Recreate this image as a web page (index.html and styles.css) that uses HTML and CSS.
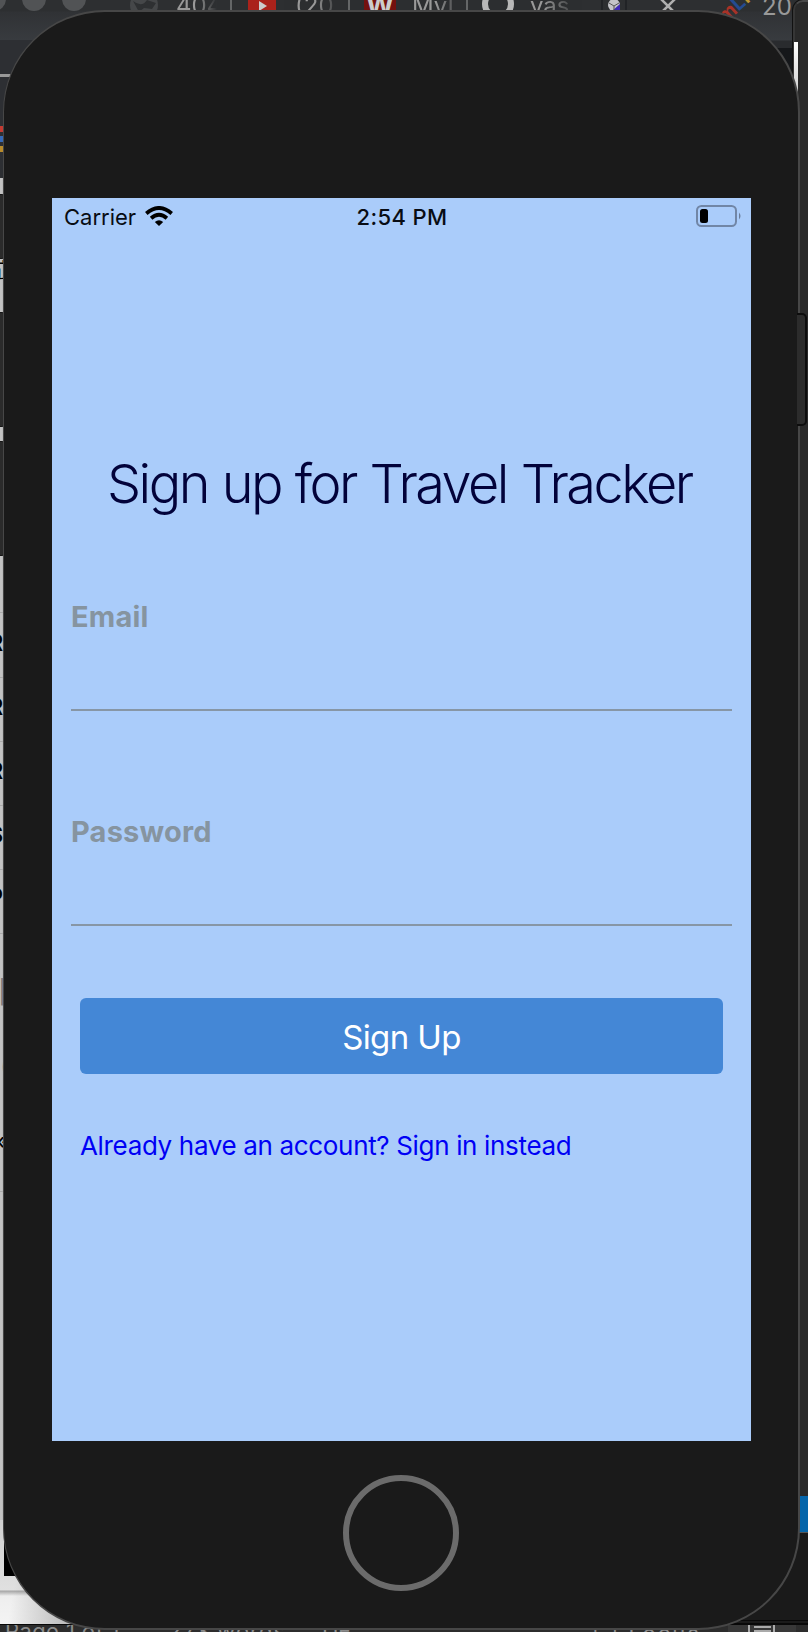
FILE: index.html
```html
<!DOCTYPE html>
<html lang="en">
<head>
<meta charset="utf-8">
<title>Travel Tracker</title>
<link rel="stylesheet" href="styles.css">
</head>
<body>
<div class="desktop">
  <div class="browser-tabs">
    <i class="light l1"></i><i class="light l2"></i><i class="light l3"></i>
    <svg class="tab-art" width="808" height="48" viewBox="0 0 808 48">
      <rect x="284" width="298" height="11" fill="#2c2e30"/>
      <circle cx="144" cy="5" r="14" fill="#454749"/>
      <path d="M133 1q9 7 14-1l9 3-4 6-8-1-5 4z" fill="#2e3032"/>
      <path d="M231 0v11M349 0v11M467 0v11" stroke="#77797a" stroke-width="1.5"/>
      <rect x="248" y="-8" width="28" height="20" fill="#aa221b"/>
      <path d="M259 1l8 5-8 5z" fill="#ccc"/>
      <rect x="364" y="-8" width="32" height="20" fill="#73110e"/>
      <circle cx="498" cy="4" r="13" fill="none" stroke="#b8b8b8" stroke-width="6"/>
      <path d="M602 0v11M626 0v11" stroke="#17181d" stroke-width="1"/>
      <circle cx="614" cy="5" r="6" fill="#c4c4c8"/><path d="M620 4v7h-8z" fill="#3d27b5"/><path d="M609 3l5 3 5-3M614 6v5" stroke="#555" fill="none"/>
      <path d="M660-2l16 16m0-16l-16 16" stroke="#b0b0b0" stroke-width="2.5"/>
    </svg>
    <span class="tt t1">404</span><span class="tt t2">(20</span><span class="tt t3">W</span><span class="tt t4">MyI</span><span class="tt t5">yas</span>
    <span class="tt ml"><b class="red">m</b><b class="blue">L</b><b class="gold">F</b></span><span class="tt t6">20</span>
  </div>
  <div class="browser-side"><i class="handle"></i><i class="bar red-bar"></i><i class="bar blue-bar"></i><i class="bar gold-bar"></i></div>
  <div class="dark-gap"></div>
  <div class="finder">
    <i class="row r1"></i><i class="row r2"></i><i class="row r3"></i><i class="row r4"></i><i class="row r5"></i><i class="row r6"></i><i class="row r7"></i>
    <span class="edge e0">疝</span><span class="edge e1">R</span><span class="edge e2">R</span><span class="edge e3">R</span><span class="edge e4">S</span><span class="edge e5">P</span><span class="edge faint e6">|</span><span class="edge faint e7">(</span><span class="edge e8">«</span>
  </div>
  <div class="paper"></div>
  <div class="black-patch"></div>
  <div class="editor"></div>
  <div class="white-patch"></div>
  <div class="blue-status"></div>
  <div class="corner"></div>
  <div class="word-bar">
    <span class="w1">Page 1 of 1</span><span class="w2">273 words</span><span class="w3">DE</span><span class="w4">[ ] Focus</span>
    <svg class="layout-icon" width="68" height="8" viewBox="0 0 68 8"><path fill="#383838" d="M0 0h68v8H0z"/><path d="M21 0v8M46 0v8M26 2h17M26 6h17" stroke="#aaa" stroke-width="2"/></svg>
  </div>
  <i class="side-button sb1"></i><i class="side-button sb2"></i><i class="side-button sb3"></i>

  <main class="phone">
    <section class="screen">
      <header class="status">
        <div class="carrier"><span>Carrier</span>
          <svg width="28" height="20" viewBox="0 0 28 20"><g fill="none" stroke="#000" stroke-width="3.8"><path d="M1.3 7.5Q14-3.6 26.7 7.5"/><path d="M6.1 12.2Q14 5.3 21.9 12.2"/></g><path d="M14 20l-4.2-4.1q4.2-3.5 8.4 0z"/></svg>
        </div>
        <span class="time">2:54 PM</span>
        <svg class="battery" width="46" height="22" viewBox="0 0 46 22"><rect x="1" y="1" width="39" height="20" rx="4.5" fill="none" stroke="#7186a6" stroke-width="2"/><rect x="4" y="4" width="8" height="14" rx="2.5"/><path d="M43 7.5q3 3.5 0 7z" fill="#6a7d9b"/></svg>
      </header>
      <h1 class="title"><span>Sign up for Travel Tracker</span></h1>
      <label class="field"><span>Email</span></label>
      <label class="field"><span>Password</span></label>
      <button class="submit"><span>Sign Up</span></button>
      <a class="signin"><span>Already have an account? Sign in instead</span></a>
    </section>
    <div class="home"></div>
  </main>
  <i class="power"></i>
</div>
</body>
</html>
```
FILE: styles.css
```css
* { box-sizing: border-box; }
body { margin: 0; font-family: Inter, "Liberation Sans", sans-serif; }
.desktop { position: relative; width: 808px; height: 1632px; overflow: hidden; background: #222; }
.desktop > *, .desktop i { position: absolute; }

/* Windows behind the simulator */
.browser-tabs { left: 0; top: 0; width: 808px; height: 48px; background: linear-gradient(#2d2f31 0, #2d2f31 11px, #303235 12px, #383b3f 40px, #292b2e 41px); overflow: hidden; }
.light { width: 24px; height: 24px; border-radius: 50%; top: -13px; background: #515355; }
.l1 { left: -18px; } .l2 { left: 22px; } .l3 { left: 62px; }
.tab-art { position: absolute; left: 0; top: 0; }
.tt { position: absolute; top: -8px; font-size: 24px; line-height: 28px; color: #999; white-space: nowrap; }
.t1 { left: 176px; width: 41px; overflow: hidden; -webkit-mask-image: linear-gradient(90deg, #000 50%, transparent); }
.t2 { left: 295px; -webkit-mask-image: linear-gradient(90deg, #000 50%, #0004); }
.t3 { left: 366px; color: #ccc; font-weight: 700; font-size: 27px; }
.t4 { left: 412px; width: 40px; overflow: hidden; -webkit-mask-image: linear-gradient(90deg, #000 60%, #0006); }
.t5 { left: 530px; -webkit-mask-image: linear-gradient(90deg, #000 30%, #0004); }
.t6 { left: 762px; top: -7px; font-size: 24px; }
.ml { left: 715px; top: -9px; font-size: 20px; transform: rotate(-42deg); }
.red { color: #a83227; } .blue { color: #244b91; } .gold { color: #bd9430; }
.browser-side { left: 0; top: 40px; width: 60px; height: 138px; background: #2d2f33; }
.handle { left: 0; top: 34px; width: 14px; height: 3px; background: #999; }
.bar { left: 0; width: 3px; height: 6px; }
.red-bar { top: 86px; background: #c43b32; } .blue-bar { top: 96px; background: #3569b8; } .gold-bar { top: 106px; background: #b88b2c; }
.dark-gap { left: 760px; top: 48px; width: 33px; height: 90px; background: #15171a; }
.finder { left: 0; top: 178px; width: 4px; height: 1342px; background: linear-gradient(90deg, #c3c3c3 2px, #a2a2a2); overflow: hidden; }
.row { left: 0; width: 4px; height: 1px; background: #aaa; }
.r1 { top: 434px; } .r2 { top: 499px; } .r3 { top: 563px; } .r4 { top: 627px; } .r5 { top: 691px; } .r6 { top: 755px; } .r7 { top: 1013px; }
.edge { position: absolute; right: 1px; font-size: 23px; line-height: 28px; font-weight: 700; color: #000; }
.e0 { top: 78px; right: -8px; font-family: "Noto Sans CJK SC", sans-serif; font-weight: 400; font-size: 20px; }
.e1 { top: 451px; } .e2 { top: 515px; } .e3 { top: 579px; } .e4 { top: 643px; } .e5 { top: 705px; }
.faint { color: #777; font-weight: 400; right: -2px; } .e6 { top: 800px; } .e7 { top: 874px; right: -5px; } .e8 { top: 949px; right: -6px; font-weight: 400; }
.paper { left: 0; top: 1520px; width: 110px; height: 104px; background: linear-gradient(100deg, #0000 20%, #0006), linear-gradient(#d0d0d0, #e0e0e0 70px, #a5a5a5 71px, #b5b5b5 72px, #eee 76px, #f4f4f4); }
.black-patch { left: 4px; top: 1530px; width: 26px; height: 46px; background: #000; }
.editor { left: 793px; top: 0; width: 20px; height: 1500px; border: 2px solid #494949; border-left-color: #363636; border-top-left-radius: 10px; background: #292929; box-shadow: 0 0 0 1px #111; }
.white-patch { left: 794px; top: 42px; width: 4px; height: 75px; background: linear-gradient(#fff, #bbb); }
.blue-status { left: 799px; top: 1496px; width: 9px; height: 36px; background: #0565aa; }
.corner { left: 700px; top: 1532px; width: 108px; height: 92px; background: #1a1a1a; border-top: 1px solid #555; border-bottom: 4px double #080808; }
.word-bar { left: 0; top: 1624px; width: 808px; height: 8px; background: #2c2c2c; border-top: 1px solid #080808; color: #8a8a8a; font-size: 22px; line-height: 26px; overflow: hidden; }
.word-bar span { position: absolute; top: -7px; white-space: nowrap; }
.w1 { left: 5px; letter-spacing: .4px; } .w2 { left: 168px; letter-spacing: 1px; } .w3 { left: 322px; } .word-bar .w4 { left: 592px; top: -5px; letter-spacing: 2px; }
.layout-icon { position: absolute; left: 749px; top: 0; margin-left: -21px; }

/* Hardware */
.side-button { left: -6px; width: 11px; background: #2b2b2b; border: 1px solid #151515; border-radius: 3px; }
.sb1 { top: 194px; height: 65px; } .sb2 { top: 312px; height: 115px; } .sb3 { top: 441px; height: 115px; }
.power { left: 797px; top: 313px; width: 10px; height: 113px; background: #2c2c2c; border: 2px solid #0d0d0d; border-left: 0; border-radius: 0 5px 5px 0; }
.phone { left: 3px; top: 10px; width: 797px; height: 1620px; border: 2px solid #474747; border-left-width: 1px; border-radius: 102px; background: #1a1a1a; padding: 186px 0 0 48px; }
.home { width: 116px; height: 116px; margin: 34px 0 0 291px; border: 6px solid #6b6b6b; border-radius: 50%; }

/* App screen */
.screen { width: 699px; height: 1243px; background: #aaccfa; display: flex; flex-direction: column; }
.status { height: 38px; padding: 0 9px 0 12px; display: grid; grid-template-columns: 1fr auto 1fr; align-items: center; font-size: 22px; line-height: 38px; color: #080c14; }
.carrier { display: flex; align-items: center; gap: 9px; }
.carrier svg { position: relative; top: -1px; }
.time { font-weight: 550; letter-spacing: .4px; margin-left: -2px; }
.battery { justify-self: end; position: relative; top: -1px; }
.title { margin: 208px 0 0; padding-left: 55px; height: 81px; font-size: 54px; line-height: 80px; font-weight: 320; letter-spacing: -2.5px; word-spacing: 1px; color: #02023a; white-space: nowrap; }
.field { height: 121px; margin: 65px 19px 0; padding-top: 9px; border-bottom: 2px solid #8796a5; color: #8694a0; font-size: 29px; line-height: 36px; font-weight: 700; letter-spacing: .2px; }
.field + .field { margin-top: 94px; }
.submit { flex: none; height: 76px; margin: 72px 28px 0; padding: 0; border: 0; border-radius: 6px; background: #4487d6; color: #fff; font: 400 33px/78px Inter, sans-serif; letter-spacing: -.6px; }
.signin { margin: 54px 0 0 28px; font-size: 26px; line-height: 36px; letter-spacing: -.34px; color: #0000f5; white-space: nowrap; }
```
